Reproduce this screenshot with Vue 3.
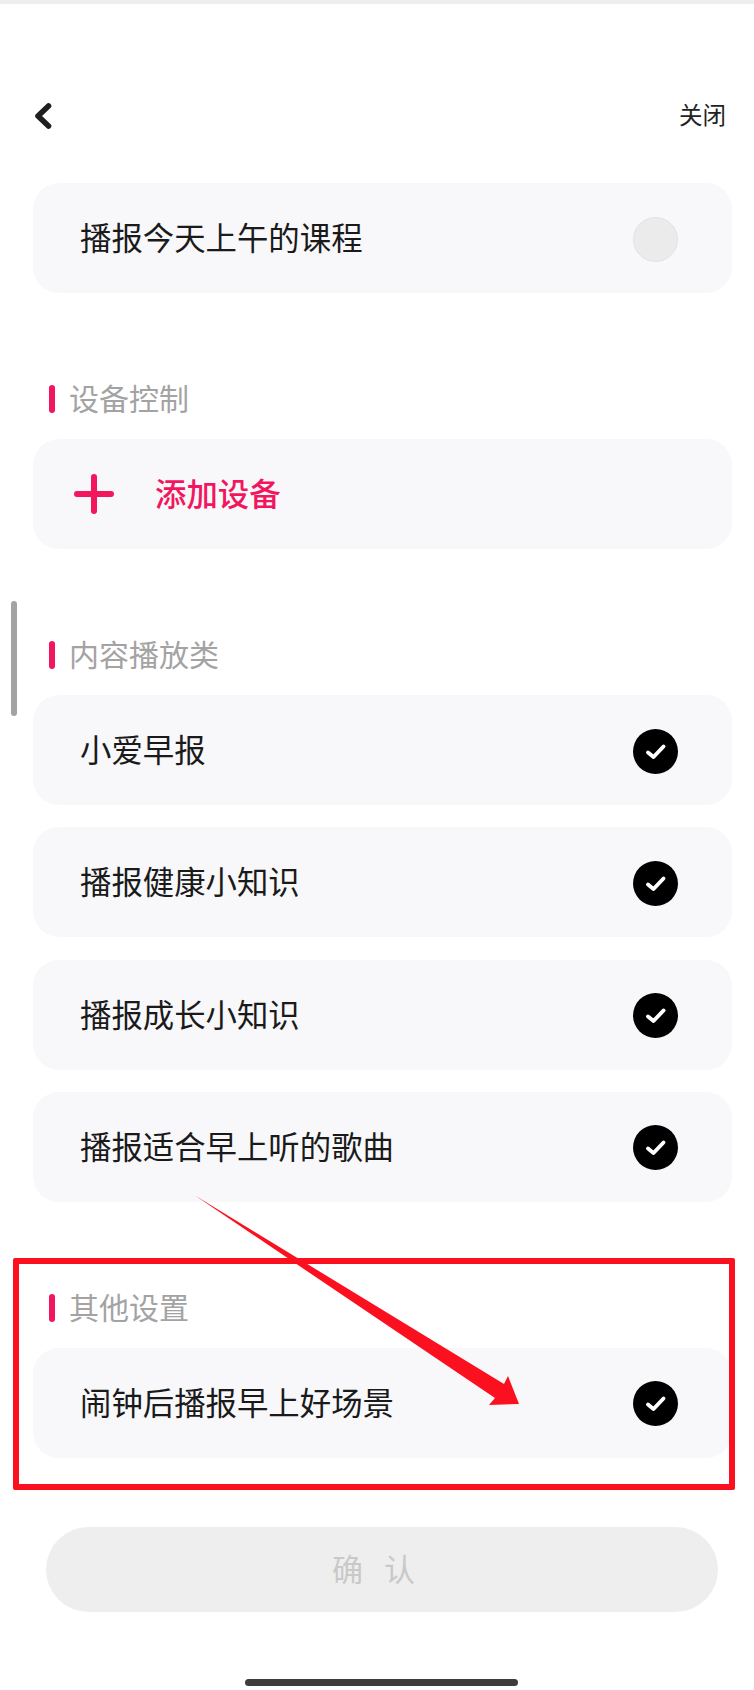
<template>
  <div class="page">
    <div class="top-strip"></div>

    <header class="nav">
      <svg class="back" width="18" height="26" viewBox="0 0 18 26">
        <path d="M14.5 3 L4 13 L14.5 23" fill="none" stroke="#1f1f1f" stroke-width="5.6" stroke-linecap="round" stroke-linejoin="round" />
      </svg>
      <span class="close">关闭</span>
    </header>

    <div class="card first">
      <span class="label">播报今天上午的课程</span>
      <span class="radio"></span>
    </div>

    <section class="group">
      <h3 class="title"><i class="bar"></i><span>设备控制</span></h3>
      <div class="card add">
        <svg class="plus" width="40" height="40" viewBox="0 0 40 40">
          <path d="M3 20 H37 M20 3 V37" fill="none" stroke="#f2165f" stroke-width="6" stroke-linecap="round" />
        </svg>
        <span class="add-text">添加设备</span>
      </div>
    </section>

    <section class="group">
      <h3 class="title"><i class="bar"></i><span>内容播放类</span></h3>
      <div class="list">
        <div class="card" v-for="item in contentItems" :key="item">
          <span class="label">{{ item }}</span>
          <svg class="check" width="45" height="45" viewBox="0 0 45 45">
            <circle cx="22.5" cy="22.5" r="22.5" fill="#000" />
            <path d="M15 23.5 L20.5 28 L30.5 17.5" fill="none" stroke="#fff" stroke-width="3.9" stroke-linecap="round" stroke-linejoin="round" />
          </svg>
        </div>
      </div>
    </section>

    <section class="group">
      <h3 class="title"><i class="bar"></i><span>其他设置</span></h3>
      <div class="card">
        <span class="label">闹钟后播报早上好场景</span>
        <svg class="check" width="45" height="45" viewBox="0 0 45 45">
          <circle cx="22.5" cy="22.5" r="22.5" fill="#000" />
          <path d="M15 23.5 L20.5 28 L30.5 17.5" fill="none" stroke="#fff" stroke-width="3.9" stroke-linecap="round" stroke-linejoin="round" />
        </svg>
      </div>
    </section>

    <button class="confirm">确认</button>

    <div class="scrollbar"></div>
    <div class="home-bar"></div>

    <!-- red annotation drawn on top of the screenshot -->
    <div class="mark-box"></div>
    <svg class="mark-arrow" width="754" height="1690" viewBox="0 0 754 1690">
      <polygon points="195,1195.5 504,1384 508,1376 519,1404 489,1405 495,1398" fill="#fb101f" />
    </svg>
  </div>
</template>

<script setup>
const contentItems = ['小爱早报', '播报健康小知识', '播报成长小知识', '播报适合早上听的歌曲']
</script>

<style>
body {
  margin: 0;
  background: #fff;
}
</style>

<style scoped>
.page {
  position: relative;
  width: 754px;
  height: 1690px;
  overflow: hidden;
  background: #fff;
  font-family: "Noto Sans CJK SC", "Noto Sans", sans-serif;
  color: #1a1a1a;
}
.top-strip {
  height: 4px;
  background: #eeeeee;
}
.nav {
  display: flex;
  align-items: center;
  justify-content: space-between;
  height: 46px;
  margin: 88px 28px 0 34px;
}
.back {
  margin-top: 2px;
}
.close {
  font-size: 23.5px;
  padding-bottom: 2px;
  color: #222;
}
.card {
  display: flex;
  align-items: center;
  justify-content: space-between;
  height: 110px;
  margin: 0 22px 0 33px;
  padding: 0 54px 0 47px;
  box-sizing: border-box;
  background: #f8f8fa;
  border-radius: 26px;
}
.first {
  margin-top: 45px;
}
.label {
  font-size: 31.4px;
  line-height: 40px;
  padding-bottom: 2px;
}
.radio {
  width: 45px;
  height: 45px;
  margin-top: 3px;
  box-sizing: border-box;
  border-radius: 50%;
  background: #ebebeb;
  border: 1.5px solid #e2e2e2;
}
.check {
  margin-top: 2px;
}
.group {
  margin-top: 92px;
}
.title {
  display: flex;
  align-items: center;
  gap: 14px;
  height: 28px;
  margin: 0 0 26px 49px;
  font-size: 30px;
  font-weight: 400;
  color: #a3a3a3;
}
.title span {
  padding-bottom: 4px;
}
.bar {
  width: 6px;
  height: 28px;
  border-radius: 3px;
  background: #f2165f;
}
.add {
  justify-content: flex-start;
  gap: 41px;
  padding-left: 41px;
}
.add-text {
  font-size: 31.4px;
  font-weight: 500;
  padding-bottom: 4px;
  color: #f2165f;
}
.list {
  display: flex;
  flex-direction: column;
  gap: 22.33px;
}
.confirm {
  display: block;
  width: 672px;
  height: 85px;
  margin: 69px 0 0 46px;
  padding: 0 0 3px 4px;
  border: none;
  border-radius: 43px;
  background: #eeeeee;
  color: #c9c9c9;
  font-family: inherit;
  font-size: 31px;
  letter-spacing: 21px;
}
.scrollbar {
  position: absolute;
  left: 11px;
  top: 601px;
  width: 6px;
  height: 115px;
  border-radius: 3px;
  background: #a3a3a3;
}
.home-bar {
  position: absolute;
  left: 245px;
  top: 1679px;
  width: 273px;
  height: 7px;
  border-radius: 4px;
  background: #3c3c3c;
}
.mark-box {
  position: absolute;
  left: 13px;
  top: 1258px;
  width: 722px;
  height: 232px;
  box-sizing: border-box;
  border: 6px solid #fb101f;
  border-radius: 2px;
}
.mark-arrow {
  position: absolute;
  left: 0;
  top: 0;
}
</style>
